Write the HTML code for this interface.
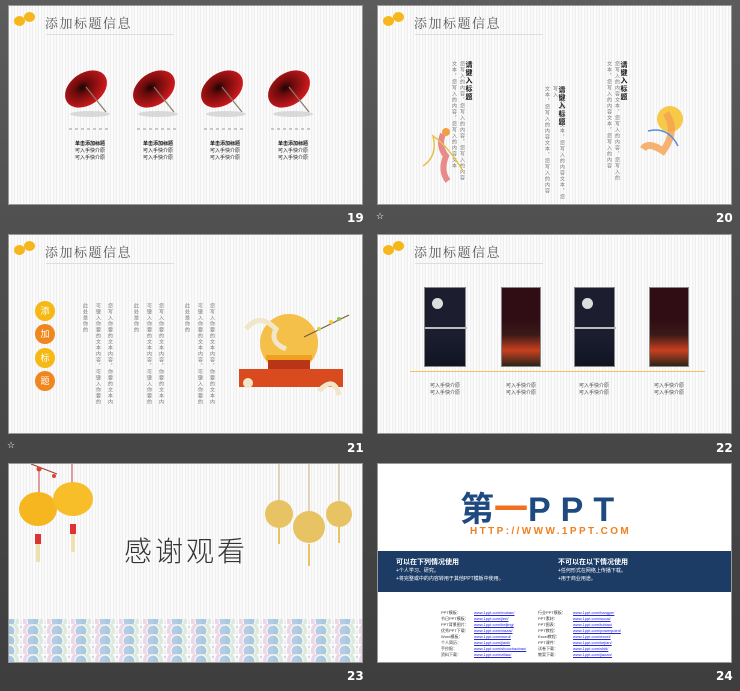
<!DOCTYPE html>
<html><head><meta charset="utf-8"><style>
*{margin:0;padding:0;box-sizing:border-box}
body{width:740px;height:691px;overflow:hidden;background:linear-gradient(#5c5c5c,#4a4a4a 50%,#3e3e3e);font-family:"Liberation Sans","Noto Sans CJK SC",sans-serif;position:relative}
.s{position:absolute;width:355px;height:200px;overflow:hidden;border:1px solid #999;background:#f8f8f8 repeating-linear-gradient(90deg,#fcfcfc 0 2px,#f0f0f0 2px 3px,#f9f9f9 3px 5px,#eeeeee 5px 6px)}
.a{position:absolute}
.num{position:absolute;color:#fff;font-weight:bold;font-size:12px;font-family:"DejaVu Sans",sans-serif}
.ttl{position:absolute;left:36px;top:7px;font-size:13px;color:#555;letter-spacing:1.5px;font-family:"Noto Serif CJK SC",serif}
.sub{position:absolute;left:37px;top:28px;width:128px;height:1px;background:#ddd}
.lan{position:absolute;width:11px;height:10px;border-radius:50%;background:#f5b71c}
.v{position:absolute;writing-mode:vertical-rl;font-size:5px;line-height:7px;color:#777;letter-spacing:1px}
.sm{position:absolute;font-size:5px;color:#444;text-align:center}
</style></head><body>

<!-- slide 19 -->
<div class="s" style="left:8px;top:5px">
 <div class="lan" style="left:5px;top:10px"></div><div class="lan" style="left:15px;top:6px"></div>
 <div class="ttl">添加标题信息</div><div class="sub"></div>
 <svg class="a" style="left:0;top:0" width="355" height="200">
  <defs><radialGradient id="u" cx="0.45" cy="0.4" r="0.6"><stop offset="0" stop-color="#1a0505"/><stop offset="0.3" stop-color="#6b0b0b"/><stop offset="1" stop-color="#d01a1e"/></radialGradient>
  <g id="um"><ellipse cx="4" cy="25" rx="20" ry="3" fill="#ccc" opacity=".7"/><ellipse cx="0" cy="0" rx="23" ry="16" transform="rotate(-35)" fill="url(#u)"/><line x1="0" y1="-2" x2="20" y2="23" stroke="#8a7a6a" stroke-width="1.2"/></g></defs>
  <use href="#um" x="77" y="83"/><use href="#um" x="145" y="83"/><use href="#um" x="213" y="83"/><use href="#um" x="280" y="83"/>
  <g stroke="#999" stroke-dasharray="3 3"><line x1="60" y1="123" x2="102" y2="123"/><line x1="128" y1="123" x2="170" y2="123"/><line x1="195" y1="123" x2="237" y2="123"/><line x1="262" y1="123" x2="304" y2="123"/></g>
 </svg>
 <div class="sm" style="left:57px;top:134px;width:48px;font-weight:bold;color:#111">单击添加标题<br><span style="font-weight:normal">可入手快介原<br>可入手快介原</span></div>
 <div class="sm" style="left:125px;top:134px;width:48px;font-weight:bold;color:#111">单击添加标题<br><span style="font-weight:normal">可入手快介原<br>可入手快介原</span></div>
 <div class="sm" style="left:192px;top:134px;width:48px;font-weight:bold;color:#111">单击添加标题<br><span style="font-weight:normal">可入手快介原<br>可入手快介原</span></div>
 <div class="sm" style="left:260px;top:134px;width:48px;font-weight:bold;color:#111">单击添加标题<br><span style="font-weight:normal">可入手快介原<br>可入手快介原</span></div>
</div>
<div class="num" style="left:347px;top:211px">19</div>

<!-- slide 20 -->
<div class="s" style="left:377px;top:5px">
 <div class="lan" style="left:5px;top:10px"></div><div class="lan" style="left:15px;top:6px"></div>
 <div class="ttl">添加标题信息</div><div class="sub"></div>
 <div class="v" style="left:87px;top:55px;font-size:7px;font-weight:bold;color:#111">请键入标题</div>
 <div class="v" style="left:80px;top:55px">您写入的内容，您写入的内容，您写入的内容</div>
 <div class="v" style="left:72px;top:55px">文本，您写入的内容，您写入的内容文本</div>
 <div class="v" style="left:180px;top:80px;font-size:7px;font-weight:bold;color:#111">请键入标题</div>
 <div class="v" style="left:173px;top:80px">您写入的内容文本，您写入的内容文本，您写入</div>
 <div class="v" style="left:165px;top:80px">文本，您写入的内容文本，您写入的内容</div>
 <div class="v" style="left:242px;top:55px;font-size:7px;font-weight:bold;color:#111">请键入标题</div>
 <div class="v" style="left:235px;top:55px">您写入的内容文本，您写入的内容，您写入的</div>
 <div class="v" style="left:227px;top:55px">文本，您写入的内容文本，您写入的内容</div>
 <svg class="a" style="left:40px;top:120px" width="60" height="60"><path d="M25 8 Q20 20 28 30 Q22 45 30 55" stroke="#e88a8a" stroke-width="6" fill="none"/><path d="M5 40 Q20 30 15 10 Q30 20 45 45" stroke="#e7c24a" stroke-width="1.5" fill="none"/><circle cx="28" cy="6" r="4" fill="#f0a040"/></svg>
 <svg class="a" style="left:260px;top:95px" width="55" height="60"><circle cx="32" cy="18" r="13" fill="#f7c948"/><path d="M28 12 Q40 30 25 50 Q10 40 5 48" stroke="#f4a050" stroke-width="7" fill="none" opacity=".8"/><path d="M10 30 Q30 25 40 45" stroke="#5a8fd0" stroke-width="1.5" fill="none"/></svg>
</div>
<div class="num" style="left:716px;top:211px">20</div>
<div class="num" style="left:376px;top:212px;font-size:9px;font-weight:normal">☆</div>

<!-- slide 21 -->
<div class="s" style="left:8px;top:234px">
 <div class="lan" style="left:5px;top:10px"></div><div class="lan" style="left:15px;top:6px"></div>
 <div class="ttl">添加标题信息</div><div class="sub"></div>
 <div class="a" style="left:26px;top:66px;width:20px;height:20px;border-radius:50%;background:#f6b814;color:#fff;font-size:9px;text-align:center;line-height:20px">添</div>
 <div class="a" style="left:26px;top:89px;width:20px;height:20px;border-radius:50%;background:#f0861e;color:#fff;font-size:9px;text-align:center;line-height:20px">加</div>
 <div class="a" style="left:26px;top:113px;width:20px;height:20px;border-radius:50%;background:#f6b814;color:#fff;font-size:9px;text-align:center;line-height:20px">标</div>
 <div class="a" style="left:26px;top:136px;width:20px;height:20px;border-radius:50%;background:#f0861e;color:#fff;font-size:9px;text-align:center;line-height:20px">题</div>
 <div class="v" style="left:72px;top:68px">此处是你的</div><div class="v" style="left:85px;top:68px">可键入你要的文本内容，可键入你要的</div><div class="v" style="left:97px;top:68px">您写入你要的文本内容，你要的文本内</div>
 <div class="v" style="left:123px;top:68px">此处是你的</div><div class="v" style="left:136px;top:68px">可键入你要的文本内容，可键入你要的</div><div class="v" style="left:148px;top:68px">您写入你要的文本内容，你要的文本内</div>
 <div class="v" style="left:174px;top:68px">此处是你的</div><div class="v" style="left:187px;top:68px">可键入你要的文本内容，可键入你要的</div><div class="v" style="left:199px;top:68px">您写入你要的文本内容，你要的文本内</div>
 <svg class="a" style="left:225px;top:72px" width="130" height="105">
  <circle cx="55" cy="36" r="29" fill="#f5c04a"/>
  <path d="M70 30 L115 8" stroke="#7a5a40" stroke-width="1.2"/><circle cx="85" cy="22" r="2" fill="#c8d840"/><circle cx="97" cy="15" r="2" fill="#f0d030"/><circle cx="105" cy="12" r="2" fill="#9bc040"/>
  <path d="M12 22 Q25 5 42 22 Q35 35 52 42" stroke="#f2e6c8" stroke-width="5" fill="none"/>
  <rect x="32" y="48" width="46" height="5" fill="#f0a020"/><rect x="34" y="53" width="42" height="9" fill="#b83518"/>
  <rect x="5" y="62" width="104" height="18" fill="#d94a1e"/>
  <circle cx="14" cy="76" r="5" fill="#f2e6c8"/><path d="M85 84 Q100 68 105 88" stroke="#f2e6c8" stroke-width="5" fill="none"/>
 </svg>
</div>
<div class="num" style="left:347px;top:441px">21</div>
<div class="num" style="left:7px;top:441px;font-size:9px;font-weight:normal">☆</div>

<!-- slide 22 -->
<div class="s" style="left:377px;top:234px">
 <div class="lan" style="left:5px;top:10px"></div><div class="lan" style="left:15px;top:6px"></div>
 <div class="ttl">添加标题信息</div><div class="sub"></div>
 <div class="a" style="left:46px;top:52px;width:42px;height:80px;background:linear-gradient(#1c1e30 60%,#101420);border:1px solid #888"><div class="a" style="left:7px;top:10px;width:11px;height:11px;border-radius:50%;background:#ddd"></div><div class="a" style="left:0;top:39px;width:42px;height:2px;background:#bbb"></div></div>
 <div class="a" style="left:123px;top:52px;width:40px;height:80px;background:linear-gradient(#300c14 40%,#3a1a18 60%,#c84020 80%,#2a2418);border:1px solid #888"></div>
 <div class="a" style="left:196px;top:52px;width:41px;height:80px;background:linear-gradient(#1c1e30 60%,#101420);border:1px solid #888"><div class="a" style="left:7px;top:10px;width:11px;height:11px;border-radius:50%;background:#ddd"></div><div class="a" style="left:0;top:39px;width:41px;height:2px;background:#bbb"></div></div>
 <div class="a" style="left:271px;top:52px;width:40px;height:80px;background:linear-gradient(#300c14 40%,#3a1a18 60%,#c84020 80%,#2a2418);border:1px solid #888"></div>
 <div class="a" style="left:32px;top:136px;width:295px;height:1px;background:#f5c060"></div>
 <div class="sm" style="left:46px;top:147px;width:42px">可入手快介原<br>可入手快介原</div>
 <div class="sm" style="left:122px;top:147px;width:42px">可入手快介原<br>可入手快介原</div>
 <div class="sm" style="left:195px;top:147px;width:42px">可入手快介原<br>可入手快介原</div>
 <div class="sm" style="left:270px;top:147px;width:42px">可入手快介原<br>可入手快介原</div>
</div>
<div class="num" style="left:716px;top:441px">22</div>

<!-- slide 23 -->
<div class="s" style="left:8px;top:463px">
 <svg class="a" style="left:0;top:0" width="355" height="200">
  <defs><pattern id="w" width="24" height="10" patternUnits="userSpaceOnUse"><rect width="24" height="10" fill="#e8eef2"/><circle cx="12" cy="12" r="11" fill="#c4d6e6" stroke="#fff" stroke-width="1.5"/><circle cx="12" cy="12" r="7" fill="#d0c8e0" stroke="#fff"/><circle cx="0" cy="7" r="11" fill="#dde9da" stroke="#fff" stroke-width="1.5"/><circle cx="24" cy="7" r="11" fill="#ecd8e4" stroke="#fff" stroke-width="1.5"/><circle cx="0" cy="7" r="6" fill="#aac8e0" stroke="#fff"/><circle cx="24" cy="7" r="6" fill="#b4cce4" stroke="#fff"/></pattern></defs>
  <rect x="0" y="155" width="355" height="45" fill="url(#w)"/>
  <path d="M22 0 L48 10" stroke="#9a4a40" stroke-width="1.2"/><circle cx="30" cy="5" r="2.5" fill="#e04030"/><circle cx="45" cy="12" r="2" fill="#e04030"/>
  <line x1="30" y1="5" x2="30" y2="32" stroke="#c44" /><line x1="63" y1="0" x2="63" y2="25" stroke="#c44"/>
  <ellipse cx="29" cy="45" rx="19" ry="17" fill="#f5b620"/><ellipse cx="64" cy="35" rx="20" ry="17" fill="#f7be2a"/>
  <rect x="26" y="70" width="6" height="10" fill="#d33"/><rect x="27" y="80" width="4" height="18" fill="#f0e0b0"/>
  <rect x="61" y="60" width="6" height="10" fill="#d33"/><rect x="62" y="70" width="4" height="18" fill="#f0e0b0"/>
  <g fill="#e8c364"><line x1="270" y1="0" x2="270" y2="45" stroke="#c8b080"/><line x1="300" y1="0" x2="300" y2="55" stroke="#c8b080"/><line x1="330" y1="0" x2="330" y2="45" stroke="#c8b080"/>
  <circle cx="270" cy="50" r="14"/><circle cx="300" cy="63" r="16"/><circle cx="330" cy="50" r="13"/>
  <rect x="269" y="64" width="2" height="16"/><rect x="299" y="80" width="2" height="22"/><rect x="329" y="63" width="2" height="16"/></g>
 </svg>
 <div class="a" style="left:115px;top:66px;font-size:28px;color:#333;letter-spacing:3px;font-family:'Noto Sans CJK SC',sans-serif;font-weight:300">感谢观看</div>
</div>
<div class="num" style="left:347px;top:669px">23</div>

<!-- slide 24 -->
<div class="s" style="left:377px;top:463px;background:#fff">
 <div class="a" style="left:82px;top:24px;font-size:34px;font-weight:bold;color:#1e4a80;line-height:38px;white-space:nowrap"><span style="font-family:'Noto Sans CJK SC',sans-serif">第</span><span style="color:#f07020;font-family:'Noto Sans CJK SC',sans-serif">一</span><span style="letter-spacing:10px">PPT</span></div>
 <div class="a" style="left:92px;top:62px;font-size:10px;color:#f08020;letter-spacing:2.4px;font-weight:bold">HTTP://WWW.1PPT.COM</div>
 <div class="a" style="left:0;top:87px;width:355px;height:41px;background:#1c3c66;color:#fff">
  <div class="a" style="left:18px;top:6px;font-size:7px;font-weight:bold">可以在下列情况使用</div>
  <div class="a" style="left:18px;top:16px;font-size:5px;line-height:8px">+个人学习、研究。<br>+将完整或中的内容转用于其他PPT模板中使用。</div>
  <div class="a" style="left:180px;top:6px;font-size:7px;font-weight:bold">不可以在以下情况使用</div>
  <div class="a" style="left:180px;top:16px;font-size:5px;line-height:8px">+任何形式在网络上传播下载。<br>+用于商业用途。</div>
 </div>
 <div class="a" style="left:63px;top:146px;font-size:4px;line-height:6px;color:#333">PPT模板：<br>节日PPT模板：<br>PPT背景图片：<br>优秀PPT下载：<br>Word模板：<br>个人简历：<br>手抄报：<br>资料下载：</div>
 <div class="a" style="left:96px;top:146px;font-size:4px;line-height:6px;color:#22d;text-decoration:underline">www.1ppt.com/moban/<br>www.1ppt.com/jieri/<br>www.1ppt.com/beijing/<br>www.1ppt.com/xiazai/<br>www.1ppt.com/word/<br>www.1ppt.com/jianli/<br>www.1ppt.com/shouchaobao/<br>www.1ppt.com/ziliao/</div>
 <div class="a" style="left:160px;top:146px;font-size:4px;line-height:6px;color:#333">行业PPT模板：<br>PPT素材：<br>PPT图表：<br>PPT教程：<br>Excel教程：<br>PPT课件：<br>试卷下载：<br>教案下载：</div>
 <div class="a" style="left:195px;top:146px;font-size:4px;line-height:6px;color:#22d;text-decoration:underline">www.1ppt.com/hangye/<br>www.1ppt.com/sucai/<br>www.1ppt.com/tubiao/<br>www.1ppt.com/powerpoint/<br>www.1ppt.com/excel/<br>www.1ppt.com/kejian/<br>www.1ppt.com/shiti/<br>www.1ppt.com/jiaoan/</div>
</div>
<div class="num" style="left:716px;top:669px">24</div>
</body></html>
